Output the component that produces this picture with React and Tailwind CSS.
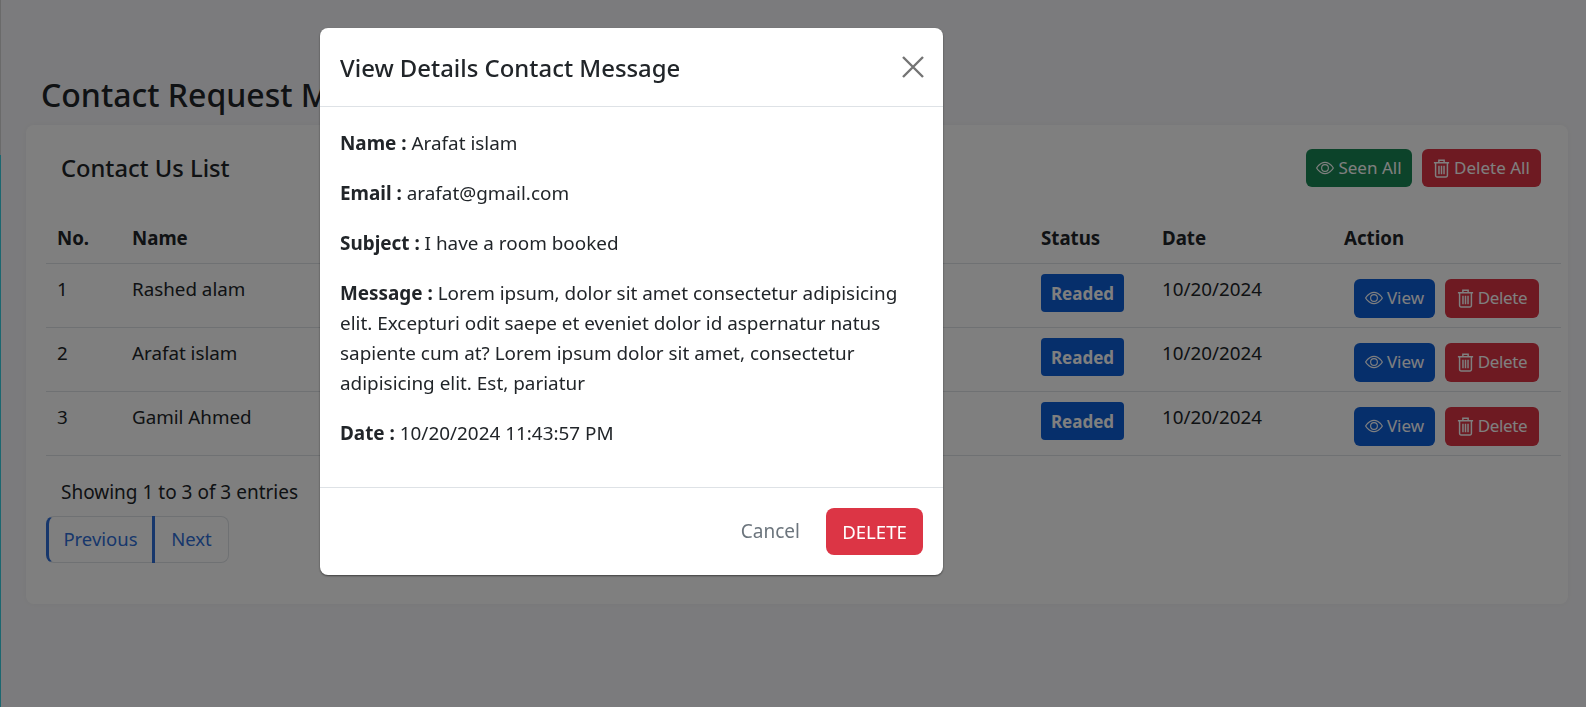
import { useState } from 'react'

const ROWS = [
  ['1', 'Rashed alam'],
  ['2', 'Arafat islam'],
  ['3', 'Gamil Ahmed'],
]

function EyeIcon() {
  return (
    <svg viewBox="0 0 16 16" className="w-[18px] h-[18px] shrink-0" fill="currentColor" aria-hidden="true">
      <path d="M16 8s-3-5.5-8-5.5S0 8 0 8s3 5.5 8 5.5S16 8 16 8zM1.173 8a13.133 13.133 0 0 1 1.66-2.043C4.12 4.668 5.88 3.5 8 3.5c2.12 0 3.879 1.168 5.168 2.457A13.133 13.133 0 0 1 14.828 8c-.058.087-.122.183-.195.288-.335.48-.83 1.12-1.465 1.755C11.879 11.332 10.119 12.5 8 12.5c-2.12 0-3.879-1.168-5.168-2.457A13.134 13.134 0 0 1 1.172 8z" />
      <path d="M8 5.5a2.5 2.5 0 1 0 0 5 2.5 2.5 0 0 0 0-5zM4.5 8a3.5 3.5 0 1 1 7 0 3.5 3.5 0 0 1-7 0z" />
    </svg>
  )
}

function TrashIcon() {
  return (
    <svg viewBox="0 0 16 18" className="w-[17px] h-[19px] shrink-0" fill="none" stroke="currentColor" strokeWidth="1.4" aria-hidden="true">
      <path d="M.8 3.5h14.4M5.5 3.5V1.2h5v2.3M2.4 3.5v12.2c0 .7.5 1.3 1.2 1.3h8.8c.7 0 1.2-.6 1.2-1.3V3.5M5.6 6.5v8M8 6.5v8M10.4 6.5v8" />
    </svg>
  )
}

function ActionButton({ color, icon, label, className }) {
  return (
    <button type="button" className={`flex items-center justify-center gap-[4px] rounded-md text-white text-[17px] ${color} ${className}`}>
      {icon}
      {label}
    </button>
  )
}

export default function App() {
  const [open, setOpen] = useState(true)

  return (
    <div className="relative h-[707px] w-full overflow-hidden bg-[#f7f7fa] text-[18.8px] text-[#212529] font-['Noto_Sans',sans-serif]">
      <div className="h-full border-l border-[#d4d4d4]">
        <div className="pl-[40px] pt-[72px] text-[32px] leading-[46px] font-medium">Contact Request Messages</div>

        <div className="ml-[25px] mr-[18px] mt-[7px] h-[479px] rounded-lg bg-white shadow-[0_0_6px_rgba(0,0,0,0.04)] px-5">
          <div className="flex items-center justify-between h-[85px] pl-[15px] pr-[7px]">
            <h4 className="text-[23.7px] font-medium pt-[2px]">Contact Us List</h4>
            <div className="flex gap-[10px] pt-[1px]">
              <ActionButton color="bg-[#198754]" icon={<EyeIcon />} label="Seen All" className="w-[106px] h-[38px]" />
              <ActionButton color="bg-[#dc3545]" icon={<TrashIcon />} label="Delete All" className="w-[119px] h-[38px]" />
            </div>
          </div>

          <table className="w-[1515px] table-fixed border-collapse">
            <colgroup>
              <col className="w-[86px]" />
              <col className="w-[289px]" />
              <col className="w-[620px]" />
              <col className="w-[121px]" />
              <col className="w-[182px]" />
              <col />
            </colgroup>
            <thead>
              <tr className="h-[53px] border-b border-[#dee2e6] text-left text-[18.7px]">
                <th className="px-[11px] pt-[4px] font-bold">No.</th>
                <th className="pt-[4px] font-bold">Name</th>
                <th />
                <th className="pt-[4px] font-bold">Status</th>
                <th className="pt-[4px] font-bold">Date</th>
                <th className="pt-[4px] font-bold">Action</th>
              </tr>
            </thead>
            <tbody>
              {ROWS.map(([no, name]) => (
                <tr key={no} className="h-[64px] border-b border-[#dee2e6]">
                  <td className="px-[11px] align-top pt-[11px]">{no}</td>
                  <td className="align-top pt-[11px]">{name}</td>
                  <td />
                  <td className="align-top pt-[10px]">
                    <span className="flex items-center justify-center w-[83px] h-[38px] pt-[2px] rounded bg-[#0d5ed7] text-white text-[17px] font-bold">Readed</span>
                  </td>
                  <td className="align-top pt-[11px]">10/20/2024</td>
                  <td className="align-top pt-[15px]">
                    <div className="flex gap-[10px] pl-[10px]">
                      <ActionButton color="bg-[#0d5ed7]" icon={<EyeIcon />} label="View" className="w-[81px] h-[39px]" />
                      <ActionButton color="bg-[#dc3545]" icon={<TrashIcon />} label="Delete" className="w-[94px] h-[39px] tracking-[-0.4px]" />
                    </div>
                  </td>
                </tr>
              ))}
            </tbody>
          </table>

          <div className="pl-[15px] pt-[22px] leading-[28px] text-[19px]">Showing 1 to 3 of 3 entries</div>
          <div className="mt-[10px] flex w-[183px] h-[47px] rounded-lg border border-[#dee2e6] border-l-[3px] border-l-[#2f6fd8] text-[18.5px] text-[#2f6fd8]">
            <a className="flex items-center justify-center w-[106px] -my-px border-r-[3px] border-[#2f6fd8]">Previous</a>
            <a className="flex items-center justify-center flex-1">Next</a>
          </div>
        </div>
      </div>

      <div className="absolute left-0 top-[155px] bottom-0 w-[1px] bg-[#38cfe0]" />

      {open && (
        <div className="fixed inset-0 bg-black/50">
          <div className="absolute left-[320px] top-[28px] w-[623px] h-[547px] rounded-lg bg-white flex flex-col shadow-[0_1px_2px_rgba(0,0,0,0.5)]">
            <div className="flex items-center justify-between h-[79px] border-b border-[#dee2e6] pl-5 pr-[19px] shrink-0">
              <h5 className="text-[23.9px] font-medium pt-[2px]">View Details Contact Message</h5>
              <button type="button" onClick={() => setOpen(false)} className="text-[#747474]" aria-label="Close">
                <svg viewBox="0 0 22 22" className="w-[22px] h-[22px]" stroke="currentColor" strokeWidth="2.4" aria-hidden="true">
                  <path d="M1 1l20 20M21 1L1 21" />
                </svg>
              </button>
            </div>

            <div className="flex-1 px-5 pt-[21px] text-[18.9px] leading-[30px]">
              <p><b>Name :</b> Arafat islam</p>
              <p className="mt-[20px]"><b>Email :</b> arafat@gmail.com</p>
              <p className="mt-[20px]"><b>Subject :</b> I have a room booked</p>
              <p className="mt-[20px]">
                <b>Message :</b> Lorem ipsum, dolor sit amet consectetur adipisicing elit. Excepturi odit saepe et eveniet dolor id aspernatur natus sapiente cum at? Lorem ipsum dolor sit amet, consectetur adipisicing elit. Est, pariatur
              </p>
              <p className="mt-[20px]"><b>Date :</b> 10/20/2024 11:43:57 PM</p>
            </div>

            <div className="flex items-center justify-end h-[88px] border-t border-[#dee2e6] pr-5 gap-[26px] shrink-0">
              <button type="button" className="text-[#6c757d] text-[19px]">Cancel</button>
              <button type="button" className="w-[97px] h-[47px] rounded-lg bg-[#dc3545] text-white text-[18.6px]">DELETE</button>
            </div>
          </div>
        </div>
      )}
    </div>
  )
}
